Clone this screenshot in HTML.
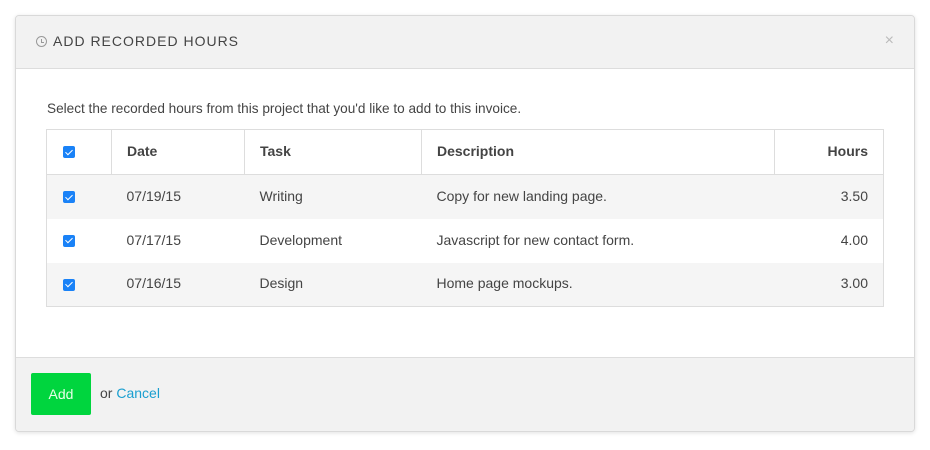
<!DOCTYPE html>
<html><head><style>
*{box-sizing:border-box;margin:0;padding:0}
body{width:930px;height:450px;background:#fff;font-family:"Liberation Sans",sans-serif;color:#444;position:relative;overflow:hidden}
.modal{position:absolute;left:15px;top:15px;width:900px;height:417px;border:1px solid #d9d9d9;border-radius:4px;background:#fff;box-shadow:0 1px 4px rgba(0,0,0,.12);overflow:hidden}
.hd{height:53px;background:#f2f2f2;border-bottom:1px solid #ddd;position:relative}
.hd .t{position:absolute;left:20px;top:17px;font-size:14px;letter-spacing:1px;color:#444}
.clock{display:inline-block;width:11px;height:11px;border:1.3px solid #999;border-radius:50%;position:relative;vertical-align:-1px;margin-right:6px}
.clock:after{content:"";position:absolute;left:3.5px;top:1.5px;width:2px;height:3px;border-left:1.2px solid #999;border-bottom:1.2px solid #999}
.x{position:absolute;right:20px;top:16px;color:#bbb;font-size:16px}
.intro{position:absolute;left:31px;top:85px;font-size:13.6px;color:#444}
table{position:absolute;left:30px;top:113px;width:838px;border-collapse:collapse;font-size:14px;border:1px solid #ddd}
th,td{height:44px;text-align:left;padding:0 15px 2px;color:#444}
th{font-weight:bold;height:45px;border-right:1px solid #ddd;border-bottom:1px solid #ddd}
th:last-child,td:last-child{text-align:right;border-right:none}
tr.s td{background:#f5f5f5}
.cb{display:inline-block;width:12px;height:12px;background:#1a82f7;border-radius:2px;position:relative;vertical-align:middle}
.cb:after{content:"";position:absolute;left:3.5px;top:1.5px;width:3px;height:6px;border-right:1.6px solid #fff;border-bottom:1.6px solid #fff;transform:rotate(45deg)}
.ft{position:absolute;left:0;right:0;bottom:0;height:74px;background:#f2f2f2;border-top:1px solid #ddd}
.btn{position:absolute;left:15px;top:15px;width:60px;height:42px;background:#00d53e;border-radius:2px;color:#e8ffe8;font-size:14px;text-align:center;line-height:42px}
.or{position:absolute;left:84px;top:27px;font-size:14px;color:#444}
.or span{color:#1a9fd0}
</style></head><body>
<div class="modal">
<div class="hd"><div class="t"><span class="clock"></span>ADD RECORDED HOURS</div><div class="x">×</div></div>
<div class="intro">Select the recorded hours from this project that you'd like to add to this invoice.</div>
<table>
<tr><th style="width:65px;padding-left:16px"><span class="cb"></span></th><th style="width:133px">Date</th><th style="width:177px">Task</th><th style="width:353px">Description</th><th>Hours</th></tr>
<tr class="s"><td style="padding-left:16px"><span class="cb"></span></td><td>07/19/15</td><td>Writing</td><td>Copy for new landing page.</td><td>3.50</td></tr>
<tr><td style="padding-left:16px"><span class="cb"></span></td><td>07/17/15</td><td>Development</td><td>Javascript for new contact form.</td><td>4.00</td></tr>
<tr class="s"><td style="padding-left:16px"><span class="cb"></span></td><td>07/16/15</td><td>Design</td><td>Home page mockups.</td><td>3.00</td></tr>
</table>
<div class="ft"><div class="btn">Add</div><div class="or">or <span>Cancel</span></div></div>
</div>
</body></html>
